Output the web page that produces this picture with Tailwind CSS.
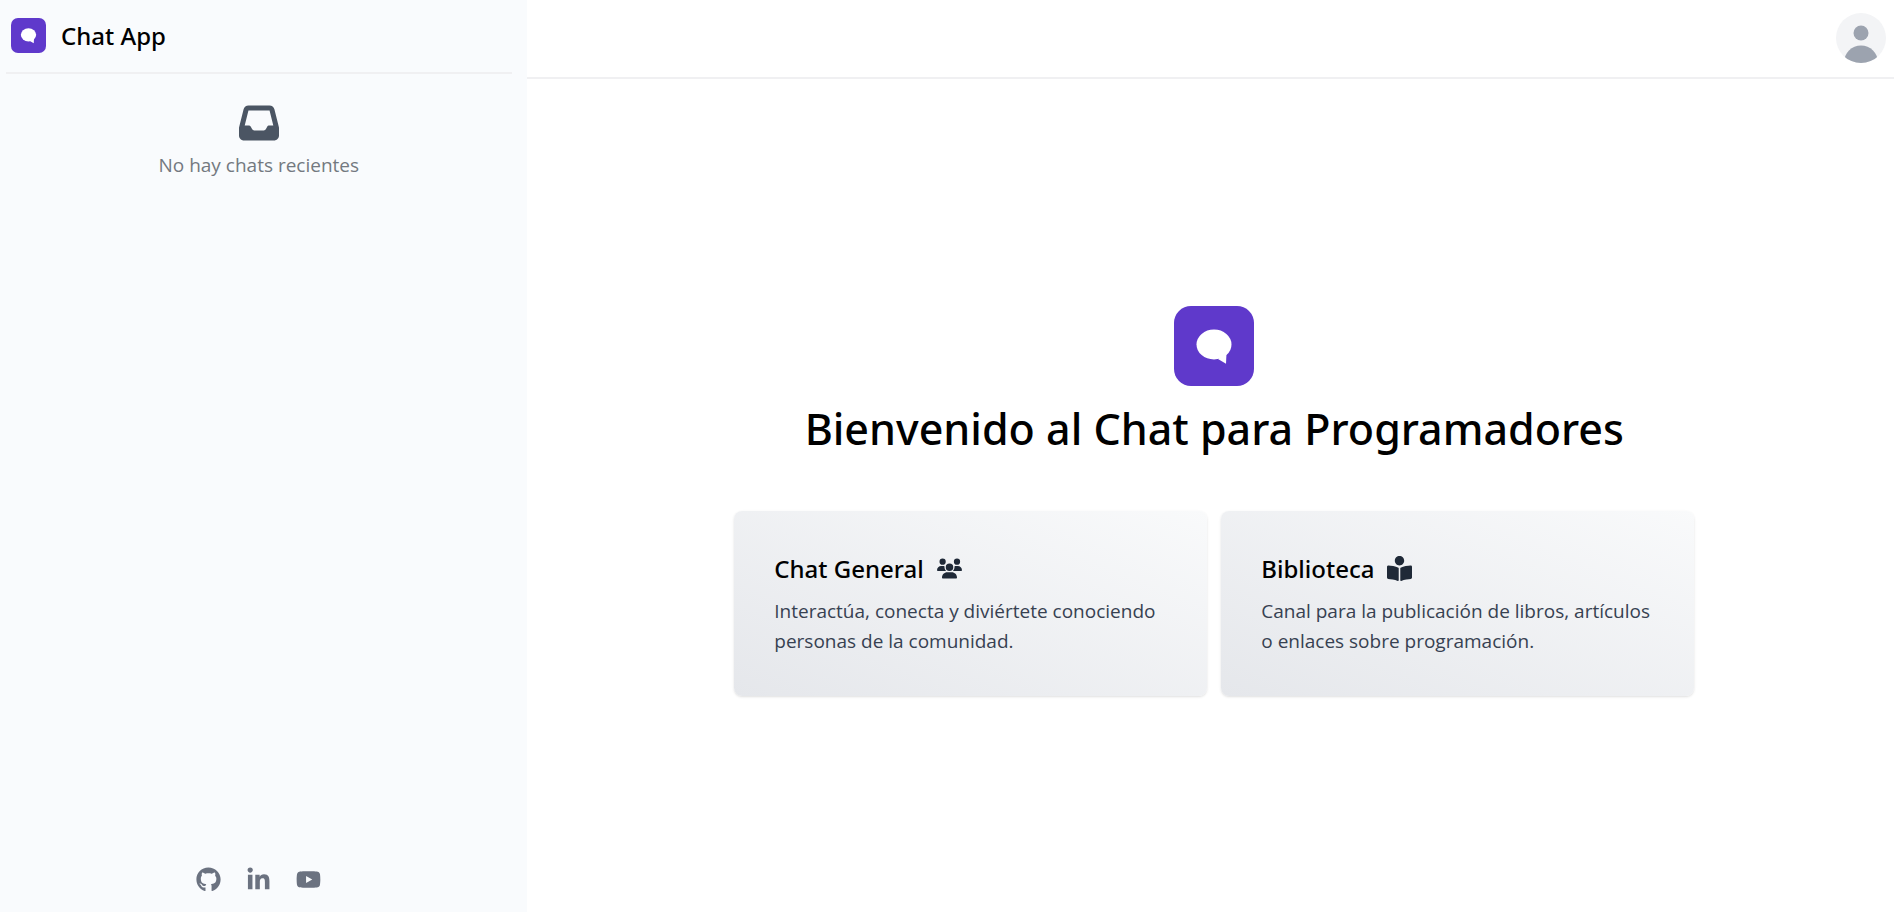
<!DOCTYPE html>
<html lang="es">
<head>
<meta charset="utf-8">
<meta name="viewport" content="width=device-width, initial-scale=1">
<title>Chat App</title>
<script src="https://cdn.jsdelivr.net/npm/@tailwindcss/browser@4"></script>
</head>
<body class="flex min-h-screen bg-white font-['Open_Sans','Noto_Sans',sans-serif] text-black">
  <aside class="flex w-[27.8%] shrink-0 flex-col bg-[#f9fbfd] pr-[15px] pl-[6px]">
    <div class="flex h-[74px] items-center gap-[15px] border-b-2 border-[#f0f0f2] pb-[2px] pl-[5px]">
      <svg class="size-[35px]" viewBox="0 0 80 80" aria-hidden="true">
        <rect width="80" height="80" rx="16" fill="#5f39cb"/>
        <ellipse cx="40" cy="38.5" rx="17.5" ry="15" fill="#fff"/>
        <path d="M44 53l8 4.700.5-11z" fill="#fff"/>
      </svg>
      <h2 class="pt-[2px] font-['Noto_Sans','Open_Sans',sans-serif] text-2xl font-medium">Chat App</h2>
    </div>
    <div class="flex flex-1 flex-col items-center pt-[29px]">
      <svg class="size-10 fill-[#4b5563]" viewBox="0 0 512 512" aria-hidden="true"><path d="M121 32C91.6 32 66 52 58.9 80.5L1.9 308.4C.6 313.5 0 318.7 0 323.9V416c0 35.3 28.7 64 64 64H448c35.3 0 64-28.7 64-64V323.9c0-5.2-.6-10.4-1.9-15.5l-57-227.9C446 52 420.400 32 391 32H121zm0 64H391l48 192H387.8c-12.1 0-23.2 6.8-28.6 17.7l-14.3 28.6c-5.4 10.8-16.5 17.7-28.6 17.7H195.8c-12.1 0-23.2-6.8-28.6-17.7l-14.3-28.6c-5.4-10.800-16.5-17.7-28.6-17.7H73L121 96z"/></svg>
      <p class="mt-[7px] text-[19px] leading-[30px] text-[#737980]">No hay chats recientes</p>
    </div>
    <nav class="flex items-center justify-center gap-[25px] pb-5" aria-label="Redes sociales">
      <a href="#" aria-label="GitHub"><svg class="size-[25px] fill-[#6b7280]" viewBox="0 0 496 512"><path d="M244.8 8C106.1 8 0 113.3 0 252c0 110.9 69.8 205.8 169.5 239.2 12.8 2.3 17.3-5.6 17.3-12.1 0-6.2-.3-40.4-.3-61.4 0 0-70 15-84.7-29.8 0 0-11.4-29.1-27.8-36.6 0 0-22.9-15.700 1.6-15.4 0 0 24.9 2 38.6 25.8 21.9 38.6 58.6 27.5 72.9 20.9 2.3-16 8.8-27.1 16-33.7-55.9-6.2-112.3-14.3-112.3-110.5 0-27.5 7.6-41.3 23.6-58.9-2.6-6.5-11.1-33.3 2.6-67.9 20.9-6.5 69 27 69 27 20-5.6 41.5-8.5 62.8-8.5s42.8 2.9 62.8 8.5c0 0 48.1-33.6 69-27 13.7 34.7 5.2 61.4 2.6 67.9 16 17.7 25.8 31.5 25.8 58.9 0 96.5-58.9 104.2-114.8 110.5 9.2 7.9 17 22.9 17 46.4 0 33.700-.3 75.4-.3 83.6 0 6.5 4.6 14.4 17.3 12.1C428.2 457.8 496 362.9 496 252 496 113.3 383.5 8 244.8 8z"/></svg></a>
      <a href="#" aria-label="LinkedIn"><svg class="size-[25px] fill-[#6b7280]" viewBox="0 0 448 512"><path transform="translate(0 8)" d="M100.28 448H7.4V148.9h92.88zM53.79 108.1C24.09 108.1 0 83.5 0 53.8a53.79 53.79 0 0 1 107.58 0c0 29.7-24.1 54.3-53.79 54.3zM447.9 448h-92.68V302.4c0-34.7-.7-79.2-48.29-79.2-48.29 0-55.69 37.7-55.69 76.7V448h-92.78V148.9h89.08v40.8h1.3c12.4-23.5 42.69-48.3 87.88-48.3 94 0 111.28 61.9 111.28 142.3V448z"/></svg></a>
      <a href="#" aria-label="YouTube"><svg class="size-[25px] fill-[#6b7280]" viewBox="0 0 576 512"><path d="M549.655 124.083c-6.281-23.65-24.787-42.276-48.284-48.597C458.781 64 288 64 288 64S117.22 64 74.629 75.486c-23.497 6.322-42.003 24.947-48.284 48.597-11.412 42.867-11.412 132.305-11.412 132.305s0 89.438 11.412 132.305c6.281 23.65 24.787 41.5 48.284 47.821C117.22 448 288 448 288 448s170.781 0 213.371-11.486c23.497-6.321 42.003-24.171 48.284-47.821 11.412-42.867 11.412-132.305 11.412-132.305s0-89.438-11.412-132.305zm-317.51 213.508V175.185l142.739 81.205-142.739 81.201z"/></svg></a>
    </nav>
  </aside>

  <div class="flex min-w-0 flex-1 flex-col">
    <header class="flex h-[79px] items-center justify-end border-b-2 border-[#f0f0f2] pr-2 pb-[2px]">
      <button type="button" aria-label="Perfil" class="size-[50px] overflow-hidden rounded-full bg-[#f3f4f6]">
        <svg class="size-full fill-[#9ca3af]" viewBox="0 0 50 50" aria-hidden="true"><circle cx="25" cy="20" r="7.500"/><circle cx="25" cy="49.500" r="17"/></svg>
      </button>
    </header>
    <main class="flex flex-1 flex-col items-center justify-center pt-[10px] pl-2">
      <svg class="size-20" viewBox="0 0 80 80" aria-hidden="true">
        <rect width="80" height="80" rx="17" fill="#5f39cb"/>
        <ellipse cx="40" cy="38.5" rx="17.500" ry="15" fill="#fff"/>
        <path d="M44 53l8 4.700.5-11z" fill="#fff"/>
      </svg>
      <h1 class="mt-[18px] mb-[57px] font-['Noto_Sans','Open_Sans',sans-serif] text-[43px] leading-[50px] font-medium">Bienvenido al Chat para Programadores</h1>
      <div class="grid w-full max-w-[960px] grid-cols-2 gap-[14px]">
        <a href="#" class="rounded-lg bg-linear-to-tr from-[#e5e7eb] to-[#f9fafb] p-10 shadow-sm">
          <h3 class="flex items-center gap-[13px] font-['Noto_Sans','Open_Sans',sans-serif] text-2xl leading-[35px] font-medium">Chat General
            <svg class="size-[25px] fill-[#1f2937]" viewBox="0 0 640 512" aria-hidden="true"><path d="M144 0a80 80 0 1 1 0 160A80 80 0 1 1 144 0zM512 0a80 80 0 1 1 0 160A80 80 0 1 1 512 0zM0 298.7C0 239.8 47.8 192 106.7 192h42.7c15.9 0 31 3.5 44.6 9.7c-1.3 7.2-1.9 14.7-1.9 22.3c0 38.2 16.8 72.5 43.3 96c-.2 0-.4 0-.7 0H21.3C9.6 320 0 310.4 0 298.7zM405.3 320c-.2 0-.4 0-.7 0c26.6-23.5 43.3-57.8 43.3-96c0-7.6-.7-15-1.9-22.3c13.6-6.3 28.7-9.7 44.6-9.7h42.7C592.2 192 640 239.8 640 298.7c0 11.8-9.6 21.3-21.3 21.3H405.3zM224 224a96 96 0 1 1 192 0 96 96 0 1 1-192 0zM128 485.3C128 411.7 187.7 352 261.3 352H378.7C452.3 352 512 411.7 512 485.3c0 14.7-11.9 26.7-26.7 26.7H154.7c-14.7 0-26.7-11.9-26.7-26.7z"/></svg>
          </h3>
          <p class="mt-[10px] text-[19px] leading-[30px] text-[#374151]">Interactúa, conecta y diviértete conociendo<br>personas de la comunidad.</p>
        </a>
        <a href="#" class="rounded-lg bg-linear-to-tr from-[#e5e7eb] to-[#f9fafb] p-10 shadow-sm">
          <h3 class="flex items-center gap-[13px] font-['Noto_Sans','Open_Sans',sans-serif] text-2xl leading-[35px] font-medium">Biblioteca
            <svg class="size-[25px] fill-[#1f2937]" viewBox="0 0 512 512" aria-hidden="true"><path d="M352 96c0-53.02-42.98-96-96-96s-96 42.98-96 96 42.98 96 96 96 96-42.98 96-96zM233.59 241.1c-59.33-36.32-155.43-46.3-203.79-49.05C13.55 191.13 0 203.51 0 219.14v222.8c0 14.33 11.59 26.28 26.49 27.05 43.66 2.29 131.99 10.68 193.04 41.43 9.37 4.72 20.48-1.71 20.48-11.87V252.56c-.01-4.67-2.32-8.95-6.42-11.46zm248.61-49.05c-48.35 2.74-144.46 12.73-203.78 49.05-4.1 2.51-6.41 6.96-6.41 11.63v245.79c0 10.19 11.14 16.63 20.54 11.9 61.04-30.72 149.32-39.11 192.97-41.4 14.9-.78 26.49-12.73 26.49-27.06V219.14c-.01-15.63-13.56-28.01-29.81-27.09z"/></svg>
          </h3>
          <p class="mt-[10px] text-[19px] leading-[30px] text-[#374151]">Canal para la publicación de libros, artículos<br>o enlaces sobre programación.</p>
        </a>
      </div>
    </main>
  </div>
</body>
</html>
